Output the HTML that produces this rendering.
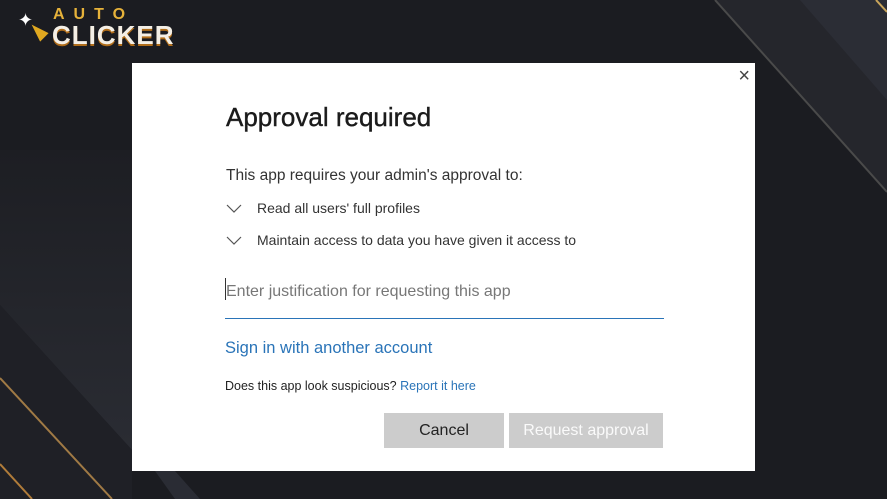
<!DOCTYPE html>
<html><head><meta charset="utf-8"><style>
body{margin:0;width:887px;height:499px;overflow:hidden;background:#1b1c21;font-family:"Liberation Sans",sans-serif;position:relative}
svg.bg{position:absolute;left:0;top:0}
.dlg{position:absolute;left:132px;top:63px;width:623px;height:408px;background:#fff}
.t{position:absolute;color:#222;white-space:nowrap}
.chev{position:absolute;width:16px;height:10px}
.btn{position:absolute;top:350px;height:35px;background:#ccc;font-size:16px;text-align:center;line-height:35px}
</style></head><body>
<svg class="bg" width="887" height="499">
<defs>
<linearGradient id="g1" x1="0" y1="0" x2="0" y2="1"><stop offset="0" stop-color="#1d1e23"/><stop offset="1" stop-color="#2a2c33"/></linearGradient>
</defs>
<polygon points="715,0 887,0 887,192" fill="#25262c"/>
<polygon points="800,0 887,0 887,100" fill="#2b2d35"/>
<line x1="715" y1="0" x2="887" y2="192" stroke="#4a4a4a" stroke-width="2"/>
<line x1="876" y1="0" x2="887" y2="12" stroke="#c9a55a" stroke-width="2"/>
<polygon points="0,150 132,150 132,450 0,305" fill="url(#g1)"/>
<polygon points="0,305 132,450 132,499 0,499" fill="#1f2026"/>
<line x1="0" y1="378" x2="112" y2="499" stroke="#a07a45" stroke-width="2"/>
<line x1="0" y1="464" x2="32" y2="499" stroke="#b07c3a" stroke-width="2"/>
<polygon points="155,471 175,471 200,499 175,499" fill="#2a2c34"/>
</svg>
<div style="position:absolute;left:18px;top:8px;">
<div style="position:absolute;left:0;top:2px;color:#fff;font-size:18px;">✦</div>
<div style="position:absolute;left:14px;top:14px;width:0;height:0;border-left:6px solid transparent;border-right:6px solid transparent;border-bottom:18px solid #e0a820;transform:rotate(-45deg)"></div>
<div style="position:absolute;left:35px;top:-2px;color:#e6b23a;font-weight:bold;font-size:16px;letter-spacing:9px">AUTO</div>
<div style="position:absolute;left:34px;top:12px;color:#f4efe6;font-weight:900;font-size:26px;letter-spacing:1px;text-shadow:0 2px 0 #b06d1a">CLICKER</div>
</div>
<div class="dlg">
<div class="t" style="right:5px;top:2px;font-size:20px;color:#444">×</div>
<div class="t" style="left:94px;top:39px;font-size:26px;color:#1b1b1b;-webkit-text-stroke:0.4px #1b1b1b">Approval required</div>
<div class="t" style="left:94px;top:104px;font-size:15.5px;color:#333">This app requires your admin's approval to:</div>
<svg class="chev" style="left:94px;top:141px" viewBox="0 0 16 10"><polyline points="1,1 8,8 15,1" fill="none" stroke="#555" stroke-width="1.2"/></svg>
<div class="t" style="left:125px;top:137px;font-size:14px;color:#333">Read all users' full profiles</div>
<svg class="chev" style="left:94px;top:173px" viewBox="0 0 16 10"><polyline points="1,1 8,8 15,1" fill="none" stroke="#555" stroke-width="1.2"/></svg>
<div class="t" style="left:125px;top:169px;font-size:14px;color:#333">Maintain access to data you have given it access to</div>
<div style="position:absolute;left:93px;top:215px;width:1px;height:22px;background:#333"></div>
<div class="t" style="left:94px;top:220px;font-size:16px;color:#777">Enter justification for requesting this app</div>
<div style="position:absolute;left:93px;top:255px;width:439px;height:1px;background:#2a74b8"></div>
<div class="t" style="left:93px;top:276px;font-size:16.5px;color:#2a74b8">Sign in with another account</div>
<div class="t" style="left:93px;top:316px;font-size:12.5px;color:#222">Does this app look suspicious? <span style="color:#2a74b8">Report it here</span></div>
<div class="btn" style="left:252px;width:120px;color:#222">Cancel</div>
<div class="btn" style="left:377px;width:154px;color:#fafafa">Request approval</div>
</div>
</body></html>
